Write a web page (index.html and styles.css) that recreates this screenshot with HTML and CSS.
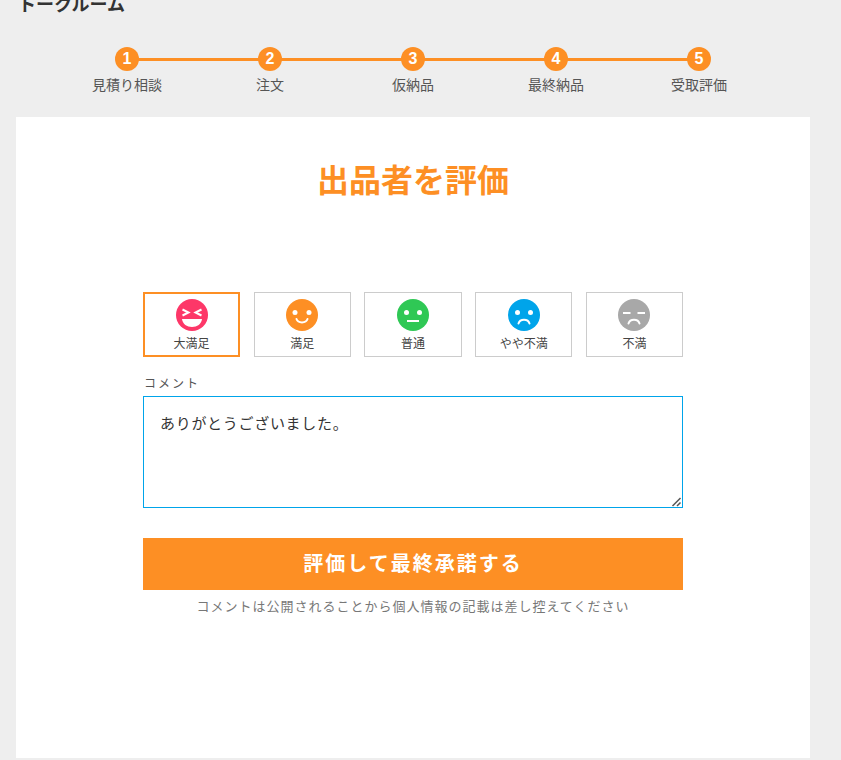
FILE: index.html
```html
<!DOCTYPE html>
<html lang="ja">
<head>
<meta charset="utf-8">
<title>トークルーム</title>
<link rel="stylesheet" href="styles.css">
</head>
<body>
<div class="page">
  <h1 class="room-title">トークルーム</h1>
  <ol class="steps">
    <li class="step"><span class="step-num">1</span><span class="step-label">見積り相談</span></li>
    <li class="step"><span class="step-num">2</span><span class="step-label">注文</span></li>
    <li class="step"><span class="step-num">3</span><span class="step-label">仮納品</span></li>
    <li class="step"><span class="step-num">4</span><span class="step-label">最終納品</span></li>
    <li class="step"><span class="step-num">5</span><span class="step-label">受取評価</span></li>
  </ol>
  <main class="card">
    <h2 class="card-title">出品者を評価</h2>
    <form class="form">
      <div class="ratings">
        <div class="rating is-selected">
          <svg class="face" viewBox="0 0 32 32"><circle cx="16" cy="16" r="16" fill="#fd3768"/><path d="M6.500 10.500 12.500 13.500 6.500 16.500M25.500 10.500 19.500 13.500 25.500 16.500" fill="none" stroke="#fff" stroke-width="2"/><path d="M6 20H26C25.500 25 21 28 16 28S6.500 25 6 20Z" fill="#fff"/></svg>
          <span class="rating-label">大満足</span>
        </div>
        <div class="rating">
          <svg class="face" viewBox="0 0 32 32"><circle cx="16" cy="16" r="16" fill="#fd8f24"/><circle cx="9" cy="13.500" r="2.500" fill="#fff"/><circle cx="23" cy="13.500" r="2.500" fill="#fff"/><path d="M10.500 20C12 24.500 20 24.500 21.500 20" fill="none" stroke="#fff" stroke-width="2" stroke-linecap="round"/></svg>
          <span class="rating-label">満足</span>
        </div>
        <div class="rating">
          <svg class="face" viewBox="0 0 32 32"><circle cx="16" cy="16" r="16" fill="#2fc855"/><circle cx="9.500" cy="13.500" r="2.500" fill="#fff"/><circle cx="22.500" cy="13.500" r="2.500" fill="#fff"/><path d="M10 22H22" fill="none" stroke="#fff" stroke-width="2"/></svg>
          <span class="rating-label">普通</span>
        </div>
        <div class="rating">
          <svg class="face" viewBox="0 0 32 32"><circle cx="16" cy="16" r="16" fill="#00a4ea"/><circle cx="9.500" cy="13.500" r="2.500" fill="#fff"/><circle cx="22.500" cy="13.500" r="2.500" fill="#fff"/><path d="M10.500 24.500C12 19.500 20 19.500 21.500 24.500" fill="none" stroke="#fff" stroke-width="2" stroke-linecap="round"/></svg>
          <span class="rating-label">やや不満</span>
        </div>
        <div class="rating">
          <svg class="face" viewBox="0 0 32 32"><circle cx="16" cy="16" r="16" fill="#a8a8a8"/><path d="M5 14H12.500M19.500 14H27" fill="none" stroke="#fff" stroke-width="2"/><path d="M10.500 24.500C12 19.500 20 19.500 21.500 24.500" fill="none" stroke="#fff" stroke-width="2" stroke-linecap="round"/></svg>
          <span class="rating-label">不満</span>
        </div>
      </div>
      <label class="comment-label" for="comment">コメント</label>
      <textarea class="comment" id="comment">ありがとうございました。</textarea>
      <button class="submit" type="button">評価して最終承諾する</button>
      <p class="note">コメントは公開されることから個人情報の記載は差し控えてください</p>
    </form>
  </main>
</div>
</body>
</html>
```
FILE: styles.css
```css
* { box-sizing: border-box; }
html, body { margin: 0; padding: 0; }
body {
  background: #eeeeee;
  color: #333333;
  font-family: "Liberation Sans", "Noto Sans CJK JP", sans-serif;
  height: 760px;
  overflow: hidden;
}
.page { padding: 0 31px 0 16px; margin-top: -8px; }
.room-title {
  margin: 0;
  height: 27px;
  font-size: 18px;
  line-height: 27px;
  font-weight: 700;
  color: #333333;
  padding-left: 2px;
}
.steps {
  list-style: none;
  margin: 28px auto 0;
  padding: 0;
  width: 715px;
  height: 70px;
  display: flex;
}
.step {
  position: relative;
  flex: 1;
  display: flex;
  flex-direction: column;
  align-items: center;
}
.step:not(:last-child)::after {
  content: "";
  position: absolute;
  left: 50%;
  width: 100%;
  top: 11px;
  height: 3px;
  background: #fd8f24;
}
.step-num {
  position: relative;
  z-index: 1;
  width: 24px;
  height: 24px;
  border-radius: 50%;
  background: #fd8f24;
  color: #ffffff;
  font-size: 16px;
  font-weight: 700;
  line-height: 24px;
  text-align: center;
}
.step-label {
  margin-top: 4px;
  font-size: 14px;
  line-height: 20px;
  color: #555555;
}
.card {
  background: #ffffff;
  height: 641px;
  padding-top: 41px;
}
.card-title {
  margin: 0;
  text-align: center;
  font-size: 32px;
  line-height: 46px;
  font-weight: 700;
  color: #fd8f24;
}
.form {
  width: 540px;
  margin: 88px auto 0 127px;
  display: flex;
  flex-direction: column;
}
.ratings {
  display: flex;
  justify-content: space-between;
}
.rating {
  width: 18%;
  height: 65px;
  border: 1px solid #cccccc;
  display: flex;
  flex-direction: column;
  align-items: center;
  padding-top: 6px;
}
.rating.is-selected {
  border: 2px solid #fd8f24;
  padding-top: 5px;
}
.face { width: 32px; height: 32px; display: block; }
.rating-label {
  margin-top: 4px;
  font-size: 12px;
  line-height: 18px;
  color: #444444;
  white-space: nowrap;
}
.comment-label {
  margin-top: 18px;
  font-size: 12px;
  line-height: 18px;
  letter-spacing: 2px;
  color: #555555;
  padding-left: 1px;
}
.comment {
  margin-top: 3px;
  width: 540px;
  height: 112px;
  display: block;
  border: 1px solid #00a4ea;
  border-radius: 0;
  outline: none;
  padding: 16px;
  font-family: "Liberation Sans", "Noto Sans CJK JP", sans-serif;
  font-size: 15px;
  line-height: 21px;
  letter-spacing: 0.7px;
  color: #333333;
  background: #ffffff;
}
.comment::-webkit-resizer {
  background: url("data:image/svg+xml,%3Csvg xmlns='http://www.w3.org/2000/svg' width='15' height='15'%3E%3Cpath d='M5.500 14 13.500 6M10 14 13.500 10.500' fill='none' stroke='%23555' stroke-width='1.500'/%3E%3C/svg%3E") no-repeat;
}
.submit {
  margin-top: 30px;
  height: 52px;
  padding: 0 0 3px;
  border: 0;
  background: #fd8f24;
  color: #ffffff;
  font-family: "Liberation Sans", "Noto Sans CJK JP", sans-serif;
  font-size: 20px;
  font-weight: 700;
  letter-spacing: 2px;
}
.note {
  margin: 7px 0 0;
  text-align: center;
  font-size: 13px;
  line-height: 20px;
  letter-spacing: 1px;
  color: #777777;
}
```
